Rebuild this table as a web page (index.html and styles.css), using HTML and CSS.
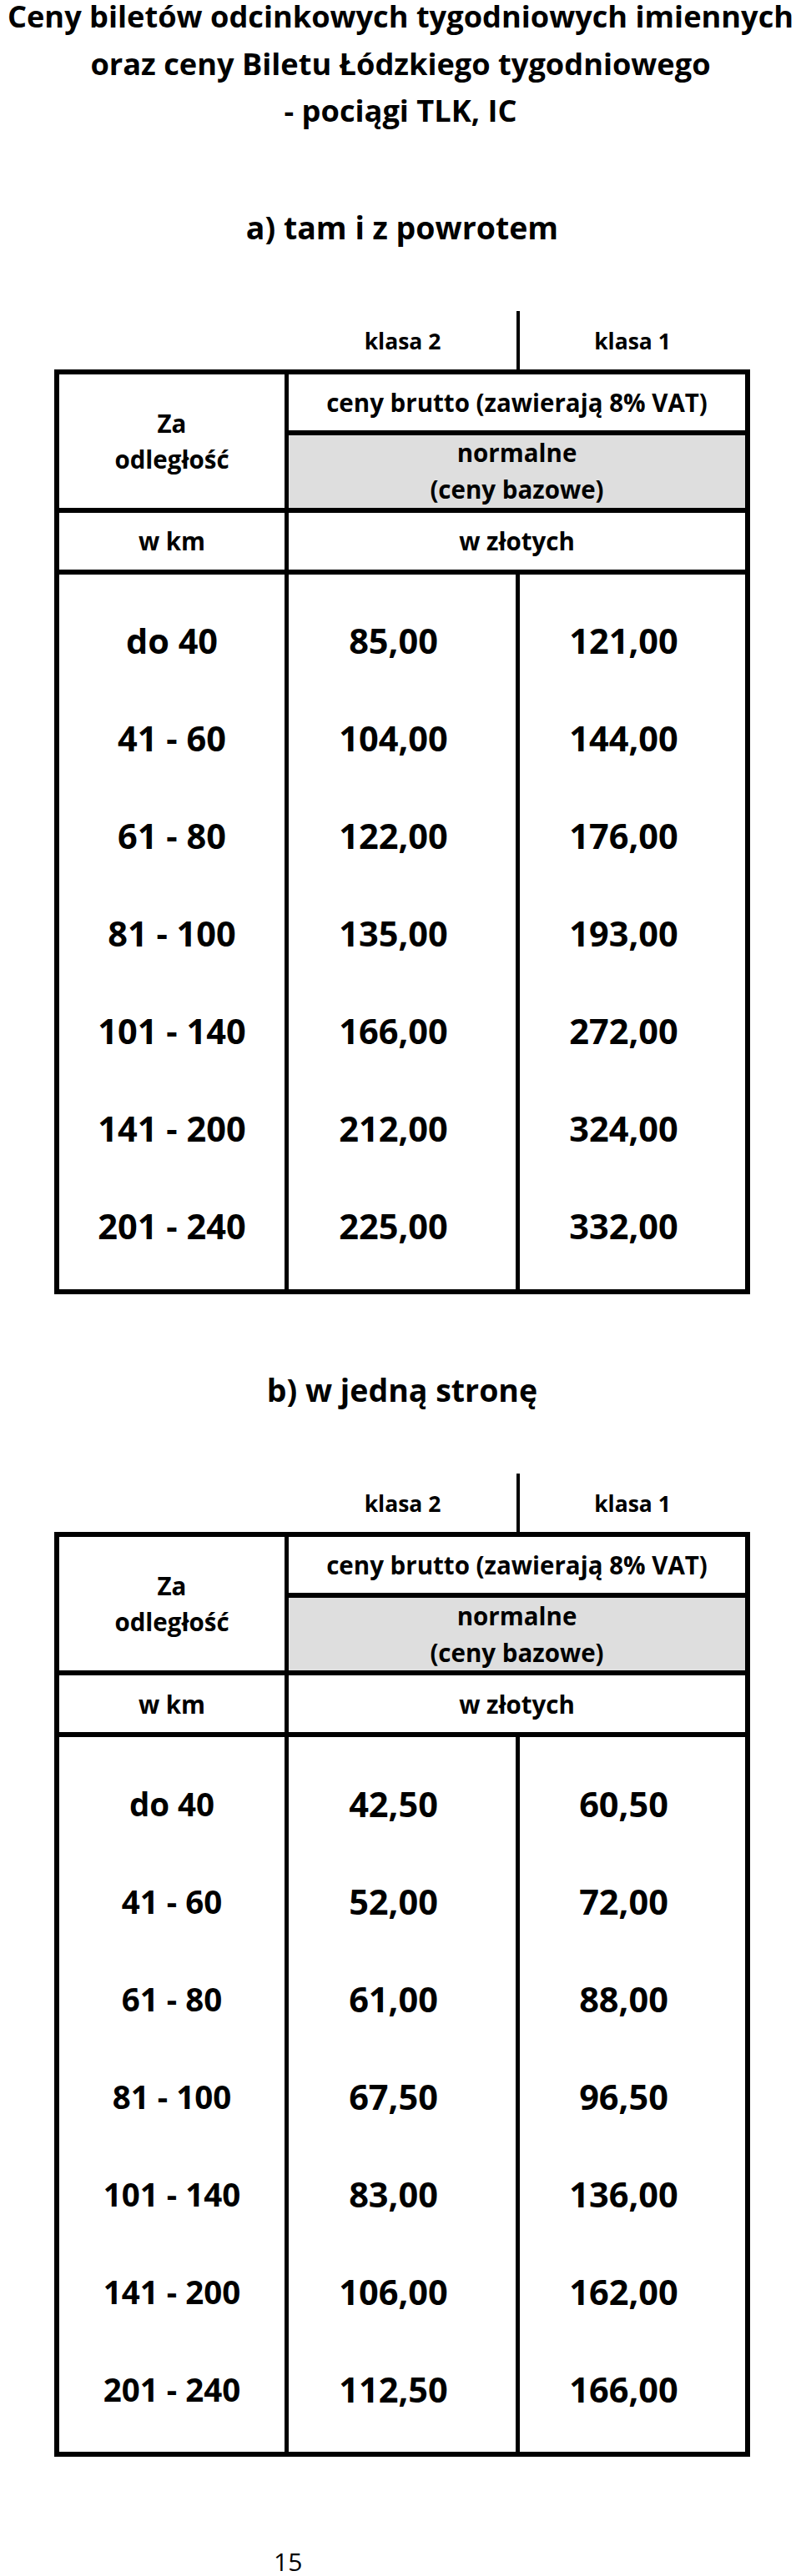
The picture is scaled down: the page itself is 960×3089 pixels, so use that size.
FILE: index.html
```html
<!DOCTYPE html>
<html lang="pl">
<head>
<meta charset="utf-8">
<title>Ceny biletów odcinkowych tygodniowych imiennych</title>
<link rel="stylesheet" href="styles.css">
</head>
<body>
<main class="page">
  <h1 class="title">
    <span class="title-line">Ceny biletów odcinkowych tygodniowych imiennych</span>
    <span class="title-line">oraz ceny Biletu Łódzkiego tygodniowego</span>
    <span class="title-line">- pociągi TLK, IC</span>
  </h1>

  <section class="section section-a">
    <h2 class="heading">a) tam i z powrotem</h2>
    <div class="classes">
      <div class="classes-spacer"></div>
      <div class="class-label">klasa 2</div>
      <div class="class-label class-label-first">klasa 1</div>
    </div>
    <div class="fare-table">
      <div class="head">
        <div class="cell cell-distance">Za<br>odległość</div>
        <div class="cell cell-gross">ceny brutto (zawierają 8% VAT)</div>
        <div class="cell cell-normal">normalne<br>(ceny bazowe)</div>
        <div class="cell cell-km">w km</div>
        <div class="cell cell-pln">w złotych</div>
      </div>
      <div class="data">
        <div class="data-col data-col-km">
          <div class="val">do 40</div>
          <div class="val">41 - 60</div>
          <div class="val">61 - 80</div>
          <div class="val">81 - 100</div>
          <div class="val">101 - 140</div>
          <div class="val">141 - 200</div>
          <div class="val">201 - 240</div>
        </div>
        <div class="data-col data-col-price data-col-mid">
          <div class="val">85,00</div>
          <div class="val">104,00</div>
          <div class="val">122,00</div>
          <div class="val">135,00</div>
          <div class="val">166,00</div>
          <div class="val">212,00</div>
          <div class="val">225,00</div>
        </div>
        <div class="data-col data-col-price">
          <div class="val">121,00</div>
          <div class="val">144,00</div>
          <div class="val">176,00</div>
          <div class="val">193,00</div>
          <div class="val">272,00</div>
          <div class="val">324,00</div>
          <div class="val">332,00</div>
        </div>
      </div>
    </div>
  </section>

  <section class="section section-b">
    <h2 class="heading">b) w jedną stronę</h2>
    <div class="classes">
      <div class="classes-spacer"></div>
      <div class="class-label">klasa 2</div>
      <div class="class-label class-label-first">klasa 1</div>
    </div>
    <div class="fare-table">
      <div class="head">
        <div class="cell cell-distance">Za<br>odległość</div>
        <div class="cell cell-gross">ceny brutto (zawierają 8% VAT)</div>
        <div class="cell cell-normal">normalne<br>(ceny bazowe)</div>
        <div class="cell cell-km">w km</div>
        <div class="cell cell-pln">w złotych</div>
      </div>
      <div class="data data-b">
        <div class="data-col data-col-km">
          <div class="val">do 40</div>
          <div class="val">41 - 60</div>
          <div class="val">61 - 80</div>
          <div class="val">81 - 100</div>
          <div class="val">101 - 140</div>
          <div class="val">141 - 200</div>
          <div class="val">201 - 240</div>
        </div>
        <div class="data-col data-col-price data-col-mid">
          <div class="val">42,50</div>
          <div class="val">52,00</div>
          <div class="val">61,00</div>
          <div class="val">67,50</div>
          <div class="val">83,00</div>
          <div class="val">106,00</div>
          <div class="val">112,50</div>
        </div>
        <div class="data-col data-col-price">
          <div class="val">60,50</div>
          <div class="val">72,00</div>
          <div class="val">88,00</div>
          <div class="val">96,50</div>
          <div class="val">136,00</div>
          <div class="val">162,00</div>
          <div class="val">166,00</div>
        </div>
      </div>
    </div>
  </section>

  <footer class="page-number">15</footer>
</main>
</body>
</html>
```

FILE: styles.css
```css
* {
  box-sizing: border-box;
}

html,
body {
  margin: 0;
  padding: 0;
  background: #ffffff;
}

body {
  font-family: "Open Sans", "DejaVu Sans", sans-serif;
  color: #000000;
}

.page {
  width: 960px;
}

.title {
  display: flex;
  flex-direction: column;
  gap: 26.5px;
  margin: 0;
  padding-top: 4px;
  font-size: 36.2px;
  font-weight: 700;
  line-height: 30px;
  text-align: center;
  white-space: nowrap;
}

.title-line {
  display: block;
}

.section {
  width: 834px;
  margin-left: 65px;
}

.section-a {
  margin-top: 98px;
}

.section-b {
  margin-top: 87px;
}

.heading {
  margin: 0;
  font-size: 37.5px;
  font-weight: 700;
  line-height: 56.5px;
  text-align: center;
}

.section-a .classes {
  margin-top: 71px;
}

.section-b .classes {
  margin-top: 72px;
}

.classes {
  display: grid;
  grid-template-columns: 281px 273px 280px;
  height: 70px;
}

.class-label {
  padding-top: 18px;
  font-size: 26.5px;
  font-weight: 700;
  line-height: 36px;
  text-align: center;
}

.class-label-first {
  border-left: 4px solid #000000;
  padding-right: 6px;
}

.fare-table {
  border: 6px solid #000000;
}

.head {
  display: grid;
  grid-template-columns: 275px 547px;
  grid-template-rows: 73px 93px 74px;
}

.cell {
  display: flex;
  align-items: center;
  justify-content: center;
  text-align: center;
  font-size: 29.5px;
  font-weight: 700;
  border-bottom: 6px solid #000000;
}

.cell-distance {
  grid-row: 1 / span 2;
  border-right: 5px solid #000000;
  line-height: 43px;
}

.cell-normal {
  background: #dedede;
  line-height: 44px;
}

.cell-km {
  border-right: 5px solid #000000;
}

.data {
  display: grid;
  grid-template-columns: 275px 277px 270px;
}

.data-col {
  display: flex;
  flex-direction: column;
  padding: 21px 0 17px;
}

.data-col-km {
  border-right: 5px solid #000000;
}

.data-col-mid {
  border-right: 5px solid #000000;
}

.data-col-price {
  padding-right: 21px;
}

.val {
  height: 117px;
  display: flex;
  align-items: center;
  justify-content: center;
  font-size: 41.5px;
  font-weight: 700;
  white-space: nowrap;
}

.data-b .data-col-km .val {
  font-size: 38.5px;
}

.page-number {
  margin-top: 110px;
  padding-left: 328px;
  font-size: 30px;
  font-weight: 400;
  line-height: 32px;
}
```
